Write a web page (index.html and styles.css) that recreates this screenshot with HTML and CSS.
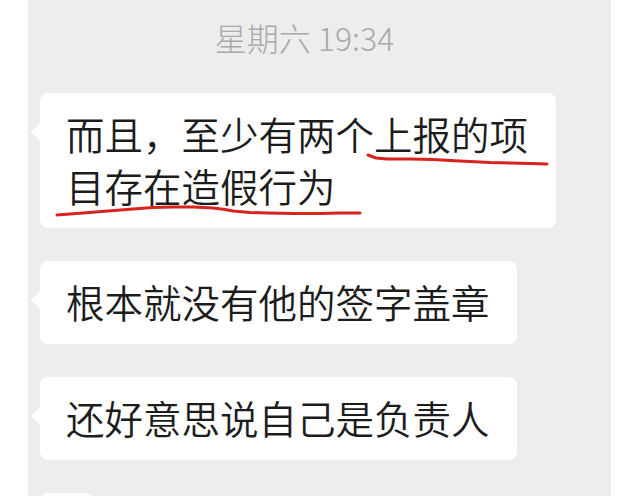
FILE: index.html
```html
<!DOCTYPE html>
<html lang="zh-CN">
<head>
    <meta charset="UTF-8">
    <meta name="viewport" content="width=device-width, initial-scale=1.0">
    <title>聊天记录</title>
    <link rel="stylesheet" href="styles.css">
</head>
<body>

    <div class="screen">
        <div class="time">星期六 19:34</div>

        <div class="messages">
            <div class="bubble">
                而且，至少有两个上报的项目存在造假行为
                <!-- red pen marks drawn over the screenshot -->
                <svg class="marks" width="520" height="140" viewBox="0 0 520 140">
                    <polyline points="328,62 336,65 347,66 370,66 393,66.5 410,67.5 430,68.5 450,69.5 470,70 490,70.5 507,71"></polyline>
                    <polyline points="17,122 30,121 43,120 68,118 93,116 113,114.5 133,114 153,114 173,115 185,116.5 193,118 210,119.5 227,120 255,120.5 280,120.5 300,120 320,120"></polyline>
                </svg>
            </div>
            <div class="bubble">根本就没有他的签字盖章</div>
            <div class="bubble">还好意思说自己是负责人</div>
            <div class="bubble"></div>
        </div>
    </div>

</body>
</html>
```

FILE: styles.css
```css
/* Page */
body {
    margin: 0;
    background-color: #ffffff;
    font-family: "Noto Sans CJK SC", "Noto Sans", sans-serif;
}

.screen {
    margin: 0 29px 0 28px;
    height: 496px;
    overflow: hidden;
    background-color: #ededed;
}

.time {
    padding: 17px 30px 0 0;
    text-align: center;
    font-size: 32px;
    font-weight: 300;
    line-height: 40px;
    color: #a9a9a9;
}

.messages {
    display: flex;
    flex-direction: column;
    align-items: flex-start;
    gap: 33px;
    margin-top: 36px;
    padding-left: 12px;
}

/* Chat bubbles */
.bubble {
    position: relative;
    max-width: 463px;
    min-height: 52px;
    padding: 14px 27px 17px 26px;
    background-color: #ffffff;
    border-radius: 8px;
    font-size: 38.5px;
    font-weight: 350;
    line-height: 52px;
    color: #1c1c1c;
}

.bubble::before {
    content: "";
    position: absolute;
    left: -9px;
    top: 30px;
    border-top: 9px solid transparent;
    border-bottom: 9px solid transparent;
    border-right: 9px solid #ffffff;
}

.marks {
    position: absolute;
    left: 0;
    top: 0;
    overflow: visible;
    pointer-events: none;
}

.marks polyline {
    fill: none;
    stroke: #d8221d;
    stroke-width: 3;
    stroke-linecap: round;
    stroke-linejoin: round;
}
```
